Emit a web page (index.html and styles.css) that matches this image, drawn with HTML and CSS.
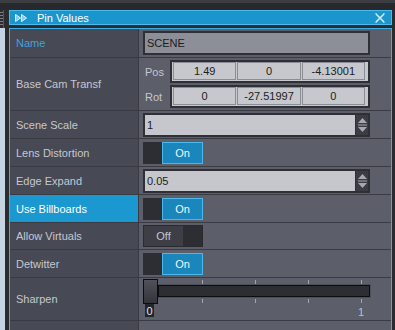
FILE: index.html
```html
<!DOCTYPE html>
<html lang="en">
<head>
  <meta charset="UTF-8">
  <title>Pin Values</title>
  <link rel="stylesheet" href="styles.css">
</head>
<body>
  <div class="topbar"></div>

  <div class="main">
    <!-- Left dock gutter -->
    <div class="gutter">
      <div class="grip"></div>
      <div class="rail"></div>
    </div>

    <div class="window">
      <!-- Title bar -->
      <div class="titlebar">
        <svg class="title-icon" width="12" height="8" viewBox="0 0 12 8">
          <path d="M0.5 0.5 L5.5 4 L0.5 7.5 Z M6.5 0.5 L11.5 4 L6.5 7.5 Z" fill="#7fcbed" stroke="#e4f5fd" stroke-width="1"/>
        </svg>
        <span class="title-text">Pin Values</span>
        <svg class="close" width="10" height="10" viewBox="0 0 10 10">
          <path d="M1 1 L9 9 M9 1 L1 9" stroke="#d4eef9" stroke-width="1.6"/>
          <path d="M0 0 L2 0 M8 0 L10 0 M0 10 L2 10 M8 10 L10 10" stroke="#d4eef9" stroke-width="1"/>
        </svg>
      </div>

      <!-- Pin rows -->
      <div class="panel">
        <div class="row row-name">
          <div class="label label-name">Name</div>
          <div class="value"><div class="field field-name">SCENE</div></div>
        </div>

        <div class="row row-tall">
          <div class="label">Base Cam Transf</div>
          <div class="value value-stack">
            <div class="vec-row">
              <span class="vec-label">Pos</span>
              <div class="vec-box">
                <div class="vec-cell">1.49</div>
                <div class="vec-cell">0</div>
                <div class="vec-cell">-4.13001</div>
              </div>
            </div>
            <div class="vec-row">
              <span class="vec-label">Rot</span>
              <div class="vec-box">
                <div class="vec-cell">0</div>
                <div class="vec-cell">-27.51997</div>
                <div class="vec-cell">0</div>
              </div>
            </div>
          </div>
        </div>

        <div class="row">
          <div class="label">Scene Scale</div>
          <div class="value">
            <div class="spin-field">
              <div class="spin-input">1</div>
              <div class="spinner">
                <svg width="11" height="18" viewBox="0 0 11 18">
                  <path d="M5.5 2 L10 7 L1 7 Z" fill="#a7a9b0"/>
                  <path d="M1 9 L10 9" stroke="#a7a9b0" stroke-width="1"/>
                  <path d="M1 11 L10 11 L5.5 16 Z" fill="#a7a9b0"/>
                </svg>
              </div>
            </div>
          </div>
        </div>

        <div class="row">
          <div class="label">Lens Distortion</div>
          <div class="value">
            <div class="toggle toggle-on"><span class="toggle-gap"></span><span class="toggle-state">On</span></div>
          </div>
        </div>

        <div class="row">
          <div class="label">Edge Expand</div>
          <div class="value">
            <div class="spin-field">
              <div class="spin-input">0.05</div>
              <div class="spinner">
                <svg width="11" height="18" viewBox="0 0 11 18">
                  <path d="M5.5 2 L10 7 L1 7 Z" fill="#a7a9b0"/>
                  <path d="M1 9 L10 9" stroke="#a7a9b0" stroke-width="1"/>
                  <path d="M1 11 L10 11 L5.5 16 Z" fill="#a7a9b0"/>
                </svg>
              </div>
            </div>
          </div>
        </div>

        <div class="row">
          <div class="label label-active">Use Billboards</div>
          <div class="value">
            <div class="toggle toggle-on"><span class="toggle-gap"></span><span class="toggle-state">On</span></div>
          </div>
        </div>

        <div class="row row-short">
          <div class="label">Allow Virtuals</div>
          <div class="value">
            <div class="toggle toggle-off"><span class="toggle-state">Off</span><span class="toggle-gap"></span></div>
          </div>
        </div>

        <div class="row">
          <div class="label">Detwitter</div>
          <div class="value">
            <div class="toggle toggle-on"><span class="toggle-gap"></span><span class="toggle-state">On</span></div>
          </div>
        </div>

        <div class="row row-slider">
          <div class="label">Sharpen</div>
          <div class="value value-top">
            <div class="slider">
              <div class="ticks"><i></i><i></i><i></i><i></i><i></i></div>
              <div class="track"></div>
              <div class="ticks ticks-bottom"><i></i><i></i><i></i><i></i><i></i></div>
              <div class="slider-labels">
                <span class="slider-min">0</span>
                <span class="slider-max">1</span>
              </div>
              <div class="handle"></div>
            </div>
          </div>
        </div>

        <div class="row row-last">
          <div class="label"></div>
          <div class="value"></div>
        </div>
      </div>
    </div>
  </div>
</body>
</html>
```

FILE: styles.css
```css
/* Global */
* {
  box-sizing: border-box;
}

body {
  margin: 0;
  width: 395px;
  height: 330px;
  overflow: hidden;
  background: #2b2c30;
  font-family: "Liberation Sans", Arial, sans-serif;
  font-size: 11px;
}

.topbar {
  height: 10px;
  border-top: 3px solid #3c3d42;
  background: #28292d;
}

.main {
  display: flex;
  height: 320px;
}

/* Left dock gutter */
.gutter {
  width: 9px;
  display: flex;
  flex-direction: column;
}

.grip {
  height: 18px;
  background:
    repeating-linear-gradient(to bottom, #7a7c82 0 1px, transparent 1px 3px) left 0 top 2px / 3px 13px no-repeat,
    linear-gradient(to right, transparent 3px, #55565c 3px 4px, transparent 4px);
}

.rail {
  flex: 1;
  background: linear-gradient(to right, #c4d4e0 0 5px, #2b2c30 5px);
}

/* Window */
.window {
  flex: 1;
  margin-right: 3px;
  display: flex;
  flex-direction: column;
}

.titlebar {
  height: 15px;
  border: 1px solid #4bbaee;
  background: #1b96cd;
  display: flex;
  align-items: center;
  padding: 0 6px 0 5px;
  color: #fff;
}

.title-icon {
  margin-right: 10px;
}

.close {
  margin-left: auto;
}

.panel {
  flex: 1;
  margin-top: 3px;
  border: 1px solid #3bb0e6;
  border-bottom: none;
  display: flex;
  flex-direction: column;
  background: #5c5e6a;
}

/* Rows */
.row {
  display: grid;
  grid-template-columns: 129px 1fr;
  height: 28px;
  flex: none;
  border-bottom: 1px solid #393a42;
}

.row-name { height: 29px; }
.row-tall { height: 53px; }
.row-short { height: 27px; }
.row-slider { height: 43px; }

.row-last {
  flex: 1;
  border-bottom: none;
}

.label {
  background: #474955;
  border-right: 1px solid #393a42;
  display: flex;
  align-items: center;
  padding-left: 6px;
  color: #c4c8d0;
}

.label-name {
  color: #3ea3dc;
}

.label-active {
  background: #1a98cf;
  color: #fff;
}

.value {
  background: #5c5e6a;
  display: flex;
  align-items: center;
  padding: 0 21px 0 4px;
}

.value-stack {
  flex-direction: column;
  align-items: stretch;
  justify-content: center;
  gap: 2px;
}

.value-top {
  align-items: flex-start;
  padding-top: 1px;
}

/* Text fields */
.field {
  flex: 1;
  height: 24px;
  border: 2px solid #2f3036;
  background: #c5c7cc;
  color: #1c1c20;
  padding-left: 2px;
  display: flex;
  align-items: center;
}

.field-name {
  background: #8d8f98;
}

.spin-field {
  flex: 1;
  height: 24px;
  border: 2px solid #2f3036;
  display: flex;
}

.spin-input {
  flex: 1;
  background: #c5c7cc;
  color: #1c1c20;
  padding-left: 2px;
  display: flex;
  align-items: center;
}

.spinner {
  width: 13px;
  background: #3b3d45;
  border-left: 1px solid #2f3036;
  display: flex;
  align-items: center;
  justify-content: center;
}

/* Vector fields */
.vec-row {
  display: flex;
  align-items: center;
}

.vec-label {
  width: 27px;
  padding-left: 2px;
  color: #c4c8d0;
}

.vec-box {
  flex: 1;
  height: 23px;
  border: 2px solid #2f3036;
  background: #c6c8cd;
  padding: 0 3px 1px 1px;
  display: flex;
  gap: 1px;
}

.vec-cell {
  flex: 1;
  border: 1px solid #8b8d94;
  display: flex;
  align-items: center;
  justify-content: center;
  color: #1c1c20;
}

/* Toggles */
.toggle {
  width: 60px;
  height: 22px;
  display: flex;
  background: #2d2e33;
}

.toggle-gap {
  width: 19px;
}

.toggle-state {
  flex: 1;
  display: flex;
  align-items: center;
  justify-content: center;
}

.toggle-on .toggle-state {
  background: #1a86bc;
  border: 1px solid #4ab8ec;
  color: #eef6fa;
}

.toggle-off {
  border: 1px solid #2a2b30;
}

.toggle-off .toggle-state {
  flex: none;
  width: 39px;
  background: #3d3e46;
  color: #c4c8d0;
}

/* Slider */
.slider {
  position: relative;
  width: 227px;
}

.ticks {
  display: flex;
  justify-content: space-between;
  height: 4px;
  margin-top: 1px;
  padding: 0 8px 0 6px;
}

.ticks i {
  width: 1px;
  background: #a3a6ae;
}

.ticks-bottom {
  margin-top: 2px;
}

.track {
  height: 12px;
  margin: 1px 0 0 15px;
  border: 1px solid #0d0d0f;
  background: #2d2e34;
  box-shadow: 0 0 0 1px #4e5059;
}

.slider-labels {
  display: flex;
  justify-content: space-between;
  margin-top: 1px;
}

.slider-min {
  margin-left: 2px;
  width: 9px;
  height: 13px;
  background: #24252a;
  color: #d8e6f2;
  display: flex;
  align-items: center;
  justify-content: center;
}

.slider-max {
  margin-top: 2px;
  padding-right: 6px;
  color: #b4c4d2;
}

.handle {
  position: absolute;
  left: 0;
  top: 0;
  width: 15px;
  height: 25px;
  border: 1px solid #0c0c0e;
  background: linear-gradient(#50525b, #33343a);
}
```
